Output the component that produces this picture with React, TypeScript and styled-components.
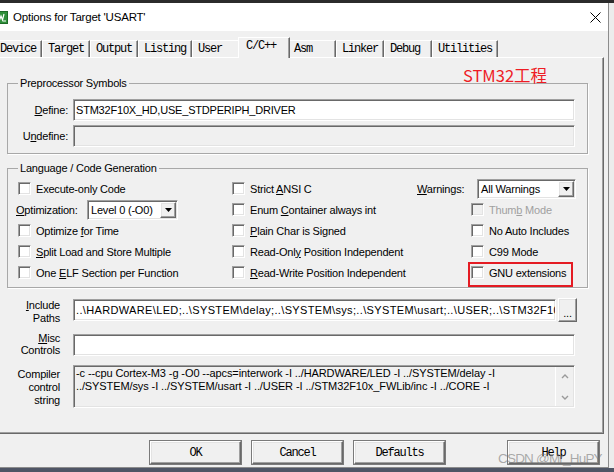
import React from 'react'
import styled, { createGlobalStyle, css } from 'styled-components'

const GlobalStyle = createGlobalStyle`
  html, body {
    margin: 0;
    padding: 0;
    background: #ececec;
  }
  * {
    box-sizing: border-box;
  }
`

const ui = `'Liberation Sans', Tahoma, Arial, sans-serif`
const mono = `'Liberation Mono', 'Courier New', monospace`

const sunken = css`
  border-top: 1px solid #a0a0a0;
  border-left: 1px solid #a0a0a0;
  border-right: 1px solid #fff;
  border-bottom: 1px solid #fff;
  box-shadow: inset 1px 1px 0 #696969, inset -1px -1px 0 #e3e3e3;
`

const raised = css`
  border-top: 1px solid #fff;
  border-left: 1px solid #fff;
  border-right: 1px solid #696969;
  border-bottom: 1px solid #696969;
  box-shadow: inset -1px -1px 0 #a0a0a0, inset 1px 1px 0 #e3e3e3;
`

const Screen = styled.div`
  position: relative;
  width: 614px;
  height: 472px;
  overflow: hidden;
  background: #ececec;
  font-family: ${ui};
  font-size: 11px;
  letter-spacing: -0.2px;
  color: #000;
`

const TopStrip = styled.div`
  height: 3px;
  background: #2b2b2b;
`

const BottomStrip = styled.div`
  height: 4px;
  background: #4f5565;
`

const Window = styled.div`
  margin-left: -6px;
  width: 615px;
  height: 465px;
  display: flex;
  flex-direction: column;
  background: #f0f0f0;
  border-right: 1px solid #8c8c8c;
  border-bottom: 1px solid #8c8c8c;
`

const TitleBar = styled.div`
  height: 28px;
  flex-shrink: 0;
  display: flex;
  align-items: center;
  gap: 5px;
  padding: 0 7px 0 1px;
  background: #fff;
`

const Title = styled.span`
  flex: 1;
  font-size: 11.5px;
  letter-spacing: -0.2px;
  color: #000;
`

const Body = styled.div`
  flex: 1;
  display: flex;
  flex-direction: column;
  padding: 6px 4px 0 0;
`

const TabStrip = styled.div`
  position: relative;
  z-index: 1;
  height: 20px;
  display: flex;
  align-items: flex-end;
`

const Tab = styled.div<{ $active?: boolean }>`
  position: relative;
  z-index: ${p => (p.$active ? 2 : 1)};
  min-width: ${p => (p.$active ? 52 : 48)}px;
  height: ${p => (p.$active ? 21 : 17)}px;
  margin: ${p => (p.$active ? '0 -2px -1px' : '0')};
  padding: 0 5px 0 ${p => (p.$active ? 7 : 5)}px;
  font-family: ${mono};
  font-size: 12px;
  letter-spacing: -1.2px;
  line-height: 16px;
  white-space: nowrap;
  background: #f0f0f0;
  border-top: 1px solid #fff;
  border-left: 1px solid #fff;
  border-right: 1px solid #696969;
  box-shadow: inset -1px 0 0 #a0a0a0;
`

const Panel = styled.div`
  position: relative;
  border-top: 1px solid #fff;
  border-left: 1px solid #fff;
  border-right: 1px solid #696969;
  border-bottom: 1px solid #696969;
  box-shadow: inset -1px -1px 0 #a0a0a0;
  padding: 18px 15px 25px 12px;
`

const Note = styled.div`
  position: absolute;
  left: 468px;
  top: 7px;
  font-family: 'Noto Sans CJK SC', 'Liberation Sans', sans-serif;
  font-size: 16.5px;
  line-height: 20px;
  letter-spacing: 0;
  color: #ee1c25;
`

const Group = styled.fieldset<{ $gap?: number }>`
  margin: ${p => p.$gap ?? 0}px 0 0;
  padding: 0;
  min-width: 0;
  border: 1px solid #a8a8a8;
  box-shadow: 1px 1px 0 #fff;
`

const Legend = styled.legend`
  margin-left: 10px;
  padding: 0 2px;
  line-height: 14px;
  color: #000;
`

const SymbolGrid = styled.div`
  display: grid;
  grid-template-columns: 60px 1fr;
  column-gap: 5px;
  row-gap: 4px;
  padding: 9px 12px 6px 0;
`

const SideLabel = styled.div<{ $top?: number; $lh?: number }>`
  text-align: right;
  line-height: ${p => p.$lh ?? 22}px;
  margin-top: ${p => p.$top ?? 0}px;
  color: #000;
`

const TextBox = styled.div<{ $disabled?: boolean; $width?: number; $spacing?: number }>`
  ${sunken};
  height: 22px;
  width: ${p => (p.$width ? `${p.$width}px` : 'auto')};
  padding: 0 2px;
  line-height: 20px;
  letter-spacing: ${p => p.$spacing ?? -0.2}px;
  white-space: nowrap;
  overflow: hidden;
  background: ${p => (p.$disabled ? '#f0f0f0' : '#fff')};
`

const OptionGrid = styled.div`
  display: grid;
  grid-template-columns: 216px 185px 1fr;
  grid-auto-rows: 21px;
  padding: 3px 0 4px 8px;
`

const Cell = styled.div<{ $indent?: number }>`
  position: relative;
  display: flex;
  align-items: center;
  gap: 5px;
  padding-left: ${p => p.$indent ?? 0}px;
  white-space: nowrap;
`

const Check = styled.span<{ $disabled?: boolean }>`
  width: 13px;
  height: 13px;
  flex-shrink: 0;
  ${sunken};
  background: ${p => (p.$disabled ? '#f0f0f0' : '#fff')};
`

const CheckText = styled.span<{ $disabled?: boolean }>`
  color: ${p => (p.$disabled ? '#a0a0a0' : '#000')};
`

const InlineLabel = styled.span<{ $width: number }>`
  width: ${p => p.$width}px;
  flex-shrink: 0;
`

const Select = styled.div<{ $width: number }>`
  ${sunken};
  width: ${p => p.$width}px;
  height: 20px;
  padding: 1px;
  display: flex;
  align-items: center;
  background: #fff;
  margin-left: -5px;
`

const SelectValue = styled.span`
  flex: 1;
  padding-left: 2px;
`

const DropButton = styled.span`
  ${raised};
  width: 16px;
  height: 16px;
  display: flex;
  align-items: center;
  justify-content: center;
  background: #f0f0f0;
`

const Highlight = styled.div`
  position: absolute;
  left: 51px;
  top: 0;
  width: 105px;
  height: 25px;
  border: 2px solid #e41b23;
`

const FieldGrid = styled.div`
  display: grid;
  grid-template-columns: 53px 502px;
  column-gap: 13px;
  row-gap: 9px;
  margin-top: 10px;
`

const PathRow = styled.div`
  display: flex;
  gap: 2px;
  height: 24px;
  align-items: center;
`

const BrowseButton = styled.div`
  ${raised};
  width: 19px;
  height: 24px;
  flex-shrink: 0;
  display: flex;
  align-items: flex-end;
  justify-content: center;
  padding-bottom: 4px;
  line-height: 8px;
  background: #f0f0f0;
  margin-right: -21px;
`

const ControlBox = styled.div`
  ${sunken};
  height: 43px;
  display: flex;
  background: #f0f0f0;
`

const ControlText = styled.div`
  flex: 1;
  padding: 1px 2px;
  line-height: 13px;
  letter-spacing: -0.1px;
  white-space: nowrap;
  overflow: hidden;
`

const ScrollColumn = styled.div`
  width: 18px;
  flex-shrink: 0;
  display: flex;
  flex-direction: column;
  justify-content: space-between;
  align-items: center;
  padding: 7px 0 6px;
  border-left: 1px solid #fff;
  margin: 1px 1px 1px 0;
`

const ButtonRow = styled.div`
  display: flex;
  gap: 11px;
  margin-top: 7px;
  padding: 0 5px 0 156px;
`

const DialogButton = styled.div<{ $push?: boolean }>`
  ${raised};
  width: 91px;
  height: 23px;
  margin-left: ${p => (p.$push ? 'auto' : '0')};
  display: flex;
  align-items: center;
  justify-content: center;
  font-family: ${mono};
  font-size: 12px;
  letter-spacing: -1.2px;
  background: #f0f0f0;
  outline: 1px solid #7a7a7a;
  outline-offset: 0;
`

const Watermark = styled.div`
  position: absolute;
  left: 498px;
  top: 451px;
  font-size: 13.5px;
  letter-spacing: -0.8px;
  color: rgba(120, 120, 120, 0.6);
  pointer-events: none;
`

const AppIcon = () => (
  <svg width='13' height='13' viewBox='0 0 13 13'>
    <rect x='0' y='0' width='13' height='13' fill='#2f8f3a' />
    <rect x='0.5' y='0.5' width='12' height='12' fill='none' stroke='#1d6b26' />
    <path d='M3 3 L4.5 9 L6 5 L7.5 9 L9 3' stroke='#fff' strokeWidth='1.2' fill='none' />
    <path d='M8 10 L11 10' stroke='#fff' strokeWidth='1' />
  </svg>
)

const CloseIcon = () => (
  <svg width='11' height='11' viewBox='0 0 11 11'>
    <path d='M0.5 0.5 L10.5 10.5 M10.5 0.5 L0.5 10.5' stroke='#000' strokeWidth='1' />
  </svg>
)

const DownArrow = () => (
  <svg width='7' height='4' viewBox='0 0 7 4'>
    <path d='M0 0 L7 0 L3.5 4 Z' fill='#000' />
  </svg>
)

const Chevron = ({ up }: { up?: boolean }) => (
  <svg width='8' height='5' viewBox='0 0 8 5'>
    <path d={up ? 'M1 4 L4 1 L7 4' : 'M1 1 L4 4 L7 1'} stroke='#9a9a9a' strokeWidth='1.4' fill='none' />
  </svg>
)

const tabs = ['Device', 'Target', 'Output', 'Listing', 'User', 'C/C++', 'Asm', 'Linker', 'Debug', 'Utilities']

const App: React.FC = () => {
  return (
    <Screen>
      <GlobalStyle />
      <TopStrip />
      <Window>
        <TitleBar>
          <AppIcon />
          <Title>Options for Target 'USART'</Title>
          <CloseIcon />
        </TitleBar>
        <Body>
          <TabStrip>
            {tabs.map(t => (
              <Tab key={t} $active={t === 'C/C++'}>
                {t}
              </Tab>
            ))}
          </TabStrip>
          <Panel>
            <Note>STM32工程</Note>

            <Group>
              <Legend>Preprocessor Symbols</Legend>
              <SymbolGrid>
                <SideLabel>
                  <u>D</u>efine:
                </SideLabel>
                <TextBox>STM32F10X_HD,USE_STDPERIPH_DRIVER</TextBox>
                <SideLabel>
                  U<u>n</u>define:
                </SideLabel>
                <TextBox $disabled />
              </SymbolGrid>
            </Group>

            <Group $gap={7}>
              <Legend>Language / Code Generation</Legend>
              <OptionGrid>
                <Cell $indent={2}>
                  <Check />
                  <CheckText>Execute-only Code</CheckText>
                </Cell>
                <Cell>
                  <Check />
                  <CheckText>
                    Strict <u>A</u>NSI C
                  </CheckText>
                </Cell>
                <Cell>
                  <InlineLabel $width={60}>
                    <u>W</u>arnings:
                  </InlineLabel>
                  <Select $width={99}>
                    <SelectValue>All Warnings</SelectValue>
                    <DropButton>
                      <DownArrow />
                    </DropButton>
                  </Select>
                </Cell>

                <Cell>
                  <InlineLabel $width={71}>
                    <u>O</u>ptimization:
                  </InlineLabel>
                  <Select $width={91}>
                    <SelectValue>Level 0 (-O0)</SelectValue>
                    <DropButton>
                      <DownArrow />
                    </DropButton>
                  </Select>
                </Cell>
                <Cell>
                  <Check />
                  <CheckText>
                    Enum <u>C</u>ontainer always int
                  </CheckText>
                </Cell>
                <Cell $indent={54}>
                  <Check $disabled />
                  <CheckText $disabled>
                    Thum<u>b</u> Mode
                  </CheckText>
                </Cell>

                <Cell $indent={2}>
                  <Check />
                  <CheckText>
                    Optimize <u>f</u>or Time
                  </CheckText>
                </Cell>
                <Cell>
                  <Check />
                  <CheckText>
                    <u>P</u>lain Char is Signed
                  </CheckText>
                </Cell>
                <Cell $indent={54}>
                  <Check />
                  <CheckText>No Auto Includes</CheckText>
                </Cell>

                <Cell $indent={2}>
                  <Check />
                  <CheckText>
                    <u>S</u>plit Load and Store Multiple
                  </CheckText>
                </Cell>
                <Cell>
                  <Check />
                  <CheckText>
                    Read-Onl<u>y</u> Position Independent
                  </CheckText>
                </Cell>
                <Cell $indent={54}>
                  <Check />
                  <CheckText>C99 Mode</CheckText>
                </Cell>

                <Cell $indent={2}>
                  <Check />
                  <CheckText>
                    One <u>E</u>LF Section per Function
                  </CheckText>
                </Cell>
                <Cell>
                  <Check />
                  <CheckText>
                    <u>R</u>ead-Write Position Independent
                  </CheckText>
                </Cell>
                <Cell $indent={54}>
                  <Check />
                  <CheckText>GNU extensions</CheckText>
                  <Highlight />
                </Cell>
              </OptionGrid>
            </Group>

            <FieldGrid>
              <SideLabel $lh={13} $top={1}>
                <u>I</u>nclude
                <br />
                Paths
              </SideLabel>
              <PathRow>
                <TextBox $width={483} $spacing={0.35}>
                  ..\HARDWARE\LED;..\SYSTEM\delay;..\SYSTEM\sys;..\SYSTEM\usart;..\USER;..\STM32F10x_FWLib\inc;..\CORE
                </TextBox>
                <BrowseButton>...</BrowseButton>
              </PathRow>

              <SideLabel $lh={12} $top={-2}>
                <u>M</u>isc
                <br />
                Controls
              </SideLabel>
              <TextBox />

              <SideLabel $lh={13} $top={3}>
                Compiler
                <br />
                control
                <br />
                string
              </SideLabel>
              <ControlBox>
                <ControlText>
                  -c --cpu Cortex-M3 -g -O0 --apcs=interwork -I ../HARDWARE/LED -I ../SYSTEM/delay -I
                  <br />
                  ../SYSTEM/sys -I ../SYSTEM/usart -I ../USER -I ../STM32F10x_FWLib/inc -I ../CORE -I
                </ControlText>
                <ScrollColumn>
                  <Chevron up />
                  <Chevron />
                </ScrollColumn>
              </ControlBox>
            </FieldGrid>
          </Panel>

          <ButtonRow>
            <DialogButton>OK</DialogButton>
            <DialogButton>Cancel</DialogButton>
            <DialogButton>Defaults</DialogButton>
            <DialogButton $push>Help</DialogButton>
          </ButtonRow>
        </Body>
      </Window>
      <BottomStrip />
      <Watermark>CSDN @Mr_HuPY</Watermark>
    </Screen>
  )
}

export default App
